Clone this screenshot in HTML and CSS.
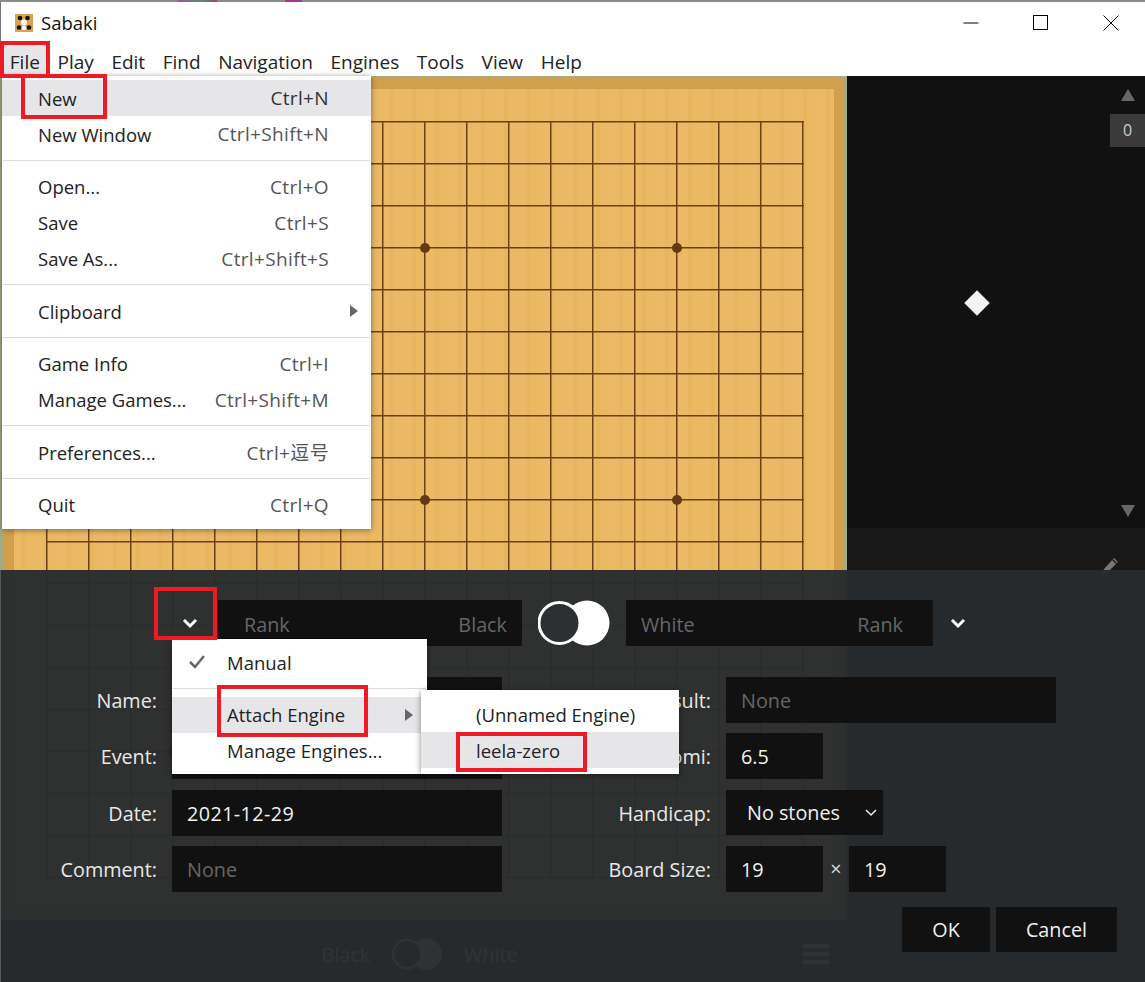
FILE: index.html
```html
<!DOCTYPE html>
<html lang="en">
<head>
  <meta charset="UTF-8">
  <meta name="viewport" content="width=device-width, initial-scale=1.0">
  <title>Sabaki</title>
  <link rel="stylesheet" href="styles.css">
</head>
<body>
  <div class="window-edge"></div>
  <header class="titlebar">
    <svg class="app-icon" width="18" height="18" viewBox="0 0 18 18">
      <rect width="18" height="18" fill="#d9a24f"/>
      <circle cx="5" cy="4" r="2.3" fill="#111"/>
      <circle cx="12.500" cy="4" r="2.300" fill="#111"/>
      <circle cx="9" cy="8.500" r="3" fill="#fff"/>
      <circle cx="4" cy="13.500" r="2.300" fill="#111"/>
      <circle cx="9" cy="14" r="2.300" fill="#fff"/>
      <circle cx="14" cy="13.500" r="2.300" fill="#111"/>
    </svg>
    <span class="app-name">Sabaki</span>
    <div class="window-buttons">
      <svg width="16" height="16" viewBox="0 0 16 16"><path d="M0.5 8H15.5" stroke="#000" fill="none"/></svg>
      <svg width="16" height="16" viewBox="0 0 16 16"><rect x="0.5" y="0.5" width="14" height="14" stroke="#000" fill="none"/></svg>
      <svg width="16" height="16" viewBox="0 0 16 16"><path d="M0.5 0.5L15.5 15.5M15.5 0.5L0.5 15.5" stroke="#000" fill="none"/></svg>
    </div>
  </header>
  <nav class="menubar">
    <span class="menubar-item active">File</span>
    <span class="menubar-item">Play</span>
    <span class="menubar-item">Edit</span>
    <span class="menubar-item">Find</span>
    <span class="menubar-item">Navigation</span>
    <span class="menubar-item">Engines</span>
    <span class="menubar-item">Tools</span>
    <span class="menubar-item">View</span>
    <span class="menubar-item">Help</span>
  </nav>

  <main class="main">
    <section class="left">
      <div class="board">
        <div class="goban">
          <div class="wood">
            <div class="grid">
              <i class="star c3 r3"></i><i class="star c9 r3"></i><i class="star c15 r3"></i>
              <i class="star c3 r9"></i><i class="star c9 r9"></i><i class="star c15 r9"></i>
              <i class="star c3 r15"></i><i class="star c9 r15"></i><i class="star c15 r15"></i>
            </div>
          </div>
        </div>
      </div>
      <div class="player-bar">
        <span></span>
        <div class="players">
          <span>Black</span>
          <svg width="50" height="46" viewBox="0 0 72 46">
            <circle cx="49" cy="23" r="22.5" fill="#fff"/>
            <circle cx="22" cy="23" r="20.5" fill="#1a1a1a" stroke="#fff" stroke-width="3"/>
          </svg>
          <span>White</span>
        </div>
        <svg class="hamburger" width="26" height="20" viewBox="0 0 26 20">
          <path d="M0 0H26V4H0ZM0 8H26V12H0ZM0 16H26V20H0Z" fill="#fff"/>
        </svg>
      </div>
    </section>

    <aside class="sidebar">
      <div class="tree">
        <div class="node"></div>
        <div class="slider">
          <i class="tri-up"></i>
          <span class="slider-badge">0</span>
          <i class="tri-down"></i>
        </div>
      </div>
      <div class="comment-panel">
        <svg width="20" height="20" viewBox="0 0 20 20">
          <path d="M14 1L18 5L7 16L2 18L4 12Z" fill="#777"/>
          <path d="M12.5 2.5L16.5 6.5" stroke="#181818" stroke-width="1.2"/>
        </svg>
      </div>
    </aside>
  </main>

  <section class="dialog">
    <div class="players-row">
      <button class="icon-btn">
        <svg width="16" height="12" viewBox="0 0 16 12"><path d="M2 3L8 9L14 3" stroke="#fff" stroke-width="3" fill="none"/></svg>
      </button>
      <div class="player-input black"><span>Rank</span><span>Black</span></div>
      <svg class="toggle" width="72" height="46" viewBox="0 0 72 46">
        <circle cx="49" cy="23" r="22.5" fill="#fff"/>
        <circle cx="21.500" cy="23" r="20.500" fill="#2d2f31" stroke="#fff" stroke-width="3"/>
      </svg>
      <div class="player-input white"><span>White</span><span>Rank</span></div>
      <button class="icon-btn">
        <svg width="16" height="12" viewBox="0 0 16 12"><path d="M2 3L8 9L14 3" stroke="#fff" stroke-width="3" fill="none"/></svg>
      </button>
    </div>

    <form class="form">
      <div class="field"><label>Name:</label><div class="input"></div></div>
      <div class="field right"><label>Result:</label><div class="input placeholder">None</div></div>
      <div class="field"><label>Event:</label><div class="input"></div></div>
      <div class="field right"><label>Komi:</label><div class="input small">6.5</div></div>
      <div class="field"><label>Date:</label><div class="input date">2021-12-29</div></div>
      <div class="field right"><label>Handicap:</label>
        <div class="input select">No stones
          <svg width="12" height="8" viewBox="0 0 12 8"><path d="M1 1L6 6L11 1" stroke="#eee" stroke-width="1.500" fill="none"/></svg>
        </div>
      </div>
      <div class="field"><label>Comment:</label><div class="input placeholder">None</div></div>
      <div class="field right"><label>Board Size:</label><div class="input small">19</div><span class="times">×</span><div class="input small">19</div></div>
    </form>

    <div class="actions">
      <button class="btn ok">OK</button>
      <button class="btn cancel">Cancel</button>
    </div>
  </section>

  <div class="menu file-menu">
    <div class="menu-item active"><span>New</span><span class="keys">Ctrl+N</span></div>
    <div class="menu-item"><span>New Window</span><span class="keys">Ctrl+Shift+N</span></div>
    <hr>
    <div class="menu-item"><span>Open...</span><span class="keys">Ctrl+O</span></div>
    <div class="menu-item"><span>Save</span><span class="keys">Ctrl+S</span></div>
    <div class="menu-item"><span>Save As...</span><span class="keys">Ctrl+Shift+S</span></div>
    <hr>
    <div class="menu-item"><span>Clipboard</span><i class="arrow"></i></div>
    <hr>
    <div class="menu-item"><span>Game Info</span><span class="keys">Ctrl+I</span></div>
    <div class="menu-item"><span>Manage Games...</span><span class="keys">Ctrl+Shift+M</span></div>
    <hr>
    <div class="menu-item"><span>Preferences...</span><span class="keys">Ctrl+逗号</span></div>
    <hr>
    <div class="menu-item"><span>Quit</span><span class="keys">Ctrl+Q</span></div>
  </div>

  <div class="menu engine-menu">
    <div class="menu-item">
      <svg class="check" width="18" height="14" viewBox="0 0 18 14"><path d="M2 7L7 12L16 1" stroke="#666" stroke-width="2.500" fill="none"/></svg>
      <span>Manual</span>
    </div>
    <hr>
    <div class="menu-item active"><span>Attach Engine</span><i class="arrow"></i></div>
    <div class="menu-item"><span>Manage Engines...</span></div>
  </div>

  <div class="menu engine-submenu">
    <div class="menu-item"><span>(Unnamed Engine)</span></div>
    <div class="menu-item active"><span>leela-zero</span></div>
  </div>

  <div class="mark mark-file"></div>
  <div class="mark mark-new"></div>
  <div class="mark mark-chevron"></div>
  <div class="mark mark-attach"></div>
  <div class="mark mark-leela"></div>
</body>
</html>
```
FILE: styles.css
```css
* {
  padding: 0;
  margin: 0;
  box-sizing: border-box;
}
html,body {
  width: 100%;
  height: 100%;
  overflow: hidden;
}
body {
  position: relative;
  display: flex;
  flex-direction: column;
  background: #fff;
  color: #222;
  font-family: "Open Sans", "Noto Sans CJK SC", sans-serif;
  font-size: 19px;
}
button {
  border: 0;
  font: inherit;
}

/* window chrome */
.window-edge {
  height: 2px;
  background: linear-gradient(90deg, #8a8a8a 178px, #a0529a 178px, #5b8f70 198px, #9a4f60 217px, #8a8a8a 217px, #8a8a8a 285px, #a03a8c 285px, #a03a8c 302px, #8a8a8a 302px);
}
.titlebar {
  height: 42px;
  display: flex;
  align-items: center;
  padding-left: 14px;
  border-left: 1px solid #777;
}
.app-icon {
  margin-right: 8px;
}
.app-name {
  font-size: 18.5px;
  padding-bottom: 2px;
  color: #111;
}
.window-buttons {
  margin-left: auto;
  display: flex;
  gap: 54px;
  padding-right: 26px;
}
.menubar {
  height: 32px;
  display: flex;
  border-left: 1px solid #777;
}
.menubar-item {
  padding: 0 8.8px;
  line-height: 36px;
}
.menubar-item.active {
  background: #e6e6e9;
}

/* main area */
.main {
  flex: 1;
  display: flex;
  min-height: 0;
}
.left {
  width: 847px;
  display: flex;
  flex-direction: column;
  background: #1b1b1b;
}
.board {
  height: 844px;
  padding: 2px 4px 2px 3px;
  background: #a9a97f;
}
.goban {
  height: 100%;
  padding: 11px 9px 11px 11px;
  background: #d0a04d;
}
.wood {
  height: 100%;
  padding: 32px 0 0 32px;
  background-color: #ebb862;
  background-image: repeating-linear-gradient(90deg, rgba(255,255,255,.025) 0 7px, rgba(160,100,20,.03) 7px 11px, rgba(255,255,255,.015) 11px 23px);
}
.grid {
  position: relative;
  width: 758px;
  height: 758px;
  background-image:
    linear-gradient(#6b4014 1px, rgba(107,64,20,.5) 1px, rgba(107,64,20,.5) 2px, transparent 2px),
    linear-gradient(90deg, #6b4014 1px, rgba(107,64,20,.5) 1px, rgba(107,64,20,.5) 2px, transparent 2px);
  background-size: 42px 42px;
}
.star {
  position: absolute;
  width: 10px;
  height: 10px;
  border-radius: 50%;
  background: #653a12;
}
.c3 { left: 122px; }
.c9 { left: 374px; }
.c15 { left: 626px; }
.r3 { top: 122px; }
.r9 { top: 374px; }
.r15 { top: 626px; }

.player-bar {
  flex: 1;
  display: grid;
  grid-template-columns: 1fr auto 1fr;
  align-items: center;
  padding: 6px 18px 0 0;
  color: #fff;
  font-size: 19.8px;
}
.players {
  display: flex;
  align-items: center;
  gap: 22px;
  margin-left: 10px;
}
.hamburger {
  justify-self: end;
}

/* sidebar */
.sidebar {
  flex: 1;
  display: flex;
  flex-direction: column;
  background: #111;
}
.tree {
  position: relative;
  height: 452px;
  display: flex;
  justify-content: flex-end;
}
.node {
  position: absolute;
  left: 121px;
  top: 218px;
  width: 18px;
  height: 18px;
  background: #f2f2f2;
  transform: rotate(45deg);
}
.slider {
  width: 35px;
  display: flex;
  flex-direction: column;
  align-items: center;
  padding: 13px 0 11px;
}
.tri-up, .tri-down {
  width: 0;
  height: 0;
  border-left: 7px solid transparent;
  border-right: 7px solid transparent;
}
.tri-up {
  border-bottom: 12px solid #666;
}
.tri-down {
  margin-top: auto;
  border-top: 12px solid #666;
}
.slider-badge {
  width: 100%;
  height: 33px;
  margin-top: 13px;
  background: #3a3a3a;
  color: #ccc;
  font-size: 16px;
  line-height: 33px;
  text-align: center;
}
.comment-panel {
  flex: 1;
  background: #181818;
  padding: 29px 0 0 253px;
}

/* info dialog */
.dialog {
  position: absolute;
  left: 0;
  right: 0;
  top: 570px;
  bottom: 0;
  padding-top: 30px;
  background: rgba(40,43,46,.97);
  border-left: 1px solid #565a5d;
  color: #e8e8e8;
  font-size: 19.8px;
}
.players-row {
  display: flex;
  align-items: center;
  padding-left: 171px;
}
.icon-btn {
  width: 36px;
  height: 46px;
  background: none;
  display: flex;
  align-items: center;
  justify-content: center;
}
.player-input {
  height: 46px;
  display: flex;
  align-items: center;
  justify-content: space-between;
  background: #111;
  color: #666;
  padding-top: 2px;
}
.player-input.black {
  width: 304px;
  margin-left: 10px;
  padding-right: 15px;
  padding-left: 26px;
}
.player-input.white {
  width: 307px;
  padding-right: 30px;
  padding-left: 15px;
}
.toggle {
  margin: 0 16px;
}
.player-input.white + .icon-btn {
  margin-left: 7px;
}
.form {
  display: grid;
  grid-template-columns: 501px 1fr;
  grid-auto-rows: 46px;
  row-gap: 10.3px;
  margin-top: 31px;
}
.field {
  display: flex;
  align-items: center;
}
.field label {
  width: 156px;
  margin-right: 15px;
  padding-top: 1px;
  text-align: right;
}
.field.right label {
  width: 209px;
}
.input {
  width: 330px;
  height: 46px;
  background: #111;
  color: #f0f0f0;
  padding-left: 15px;
  line-height: 48px;
}
.input.placeholder {
  color: #666;
}
.input.date {
  letter-spacing: .4px;
}
.input.small {
  width: 97px;
}
.input.select {
  width: 157px;
  height: 45px;
  padding-left: 21px;
  display: flex;
  align-items: center;
  justify-content: space-between;
  padding-right: 6px;
}
.times {
  width: 26px;
  text-align: center;
  color: #ddd;
}
.actions {
  display: flex;
  justify-content: flex-end;
  gap: 6px;
  padding-right: 28px;
  margin-top: 15px;
}
.btn {
  height: 45px;
  background: #111;
  color: #f0f0f0;
}
.btn.ok { width: 88px; }
.btn.cancel { width: 121px; }

/* menus */
.menu {
  position: absolute;
  background: #fff;
  box-shadow: 0 1px 6px rgba(0,0,0,.45);
  font-size: 18.5px;
}
.menu hr {
  height: 16.5px;
  border: 0;
  background: linear-gradient(#dcdcde, #dcdcde) center / calc(100% - 2px) 1px no-repeat;
}
.menu-item {
  position: relative;
  height: 36px;
  display: flex;
  align-items: center;
  justify-content: space-between;
}
.menu-item.active {
  background: #e6e6e9;
}
.keys {
  color: #555;
  font-size: 19px;
  letter-spacing: .35px;
}
.menu-item.active .keys {
  color: #333;
}
.arrow {
  position: absolute;
  width: 0;
  height: 0;
  border-top: 6px solid transparent;
  border-bottom: 6px solid transparent;
  border-left: 8px solid #666;
}
.file-menu {
  left: 2px;
  top: 76px;
  width: 369px;
  height: 453px;
  padding-top: 4px;
}
.file-menu .menu-item {
  padding: 0 42px 0 36px;
}
.file-menu .arrow {
  right: 13px;
}
.engine-menu {
  left: 172px;
  top: 639px;
  width: 255px;
  height: 135px;
  padding-top: 5px;
}
.engine-menu .menu-item {
  padding-left: 55px;
}
.engine-menu .arrow {
  right: 14px;
}
.check {
  position: absolute;
  left: 16px;
}
.engine-submenu {
  left: 421px;
  top: 690px;
  width: 258px;
  height: 84px;
  padding-top: 6px;
}
.engine-submenu .menu-item {
  padding-left: 55px;
}

/* red annotation boxes */
.mark {
  position: absolute;
  border: 4px solid #ed1c24;
}
.mark-file { left: 0; top: 41px; width: 50px; height: 37px; }
.mark-new { left: 21px; top: 74px; width: 86px; height: 45px; }
.mark-chevron { left: 154px; top: 587px; width: 63px; height: 53px; }
.mark-attach { left: 217px; top: 685px; width: 151px; height: 52px; }
.mark-leela { left: 456px; top: 732px; width: 131px; height: 40px; }
```
